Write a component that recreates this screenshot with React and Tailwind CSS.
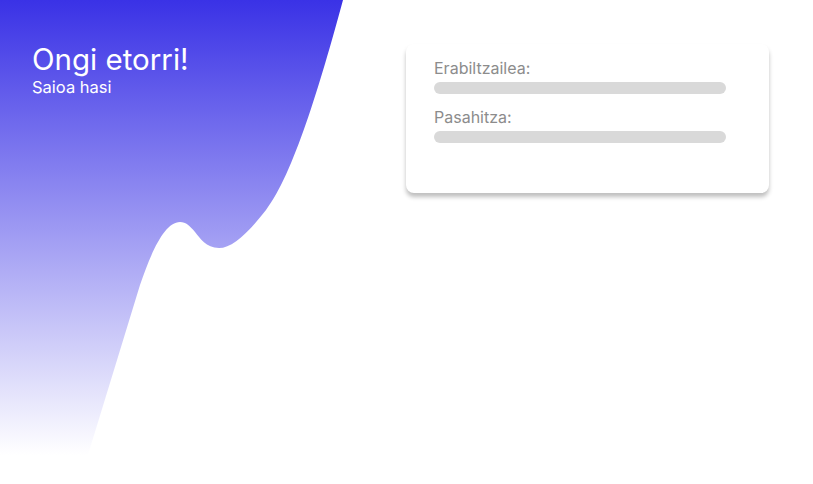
import React from 'react';

function Wave() {
  return (
    <svg
      className="absolute inset-0 pointer-events-none"
      width="813"
      height="484"
      viewBox="0 0 813 484"
    >
      <defs>
        <linearGradient id="bg" x1="0" y1="0" x2="0" y2="484" gradientUnits="userSpaceOnUse">
          <stop offset="0" stopColor="#3a32e6" />
          <stop offset="0.94" stopColor="#ffffff" />
        </linearGradient>
      </defs>
      <path
        d="M0,0 H343 C320,85 293,175 266,210 C248,233 232,248 219,248 C206,248 200,238 195,232 C190,226 186,222 180,222 C165,222 152,250 140,285 L87,458 L87,484 H0 Z"
        fill="url(#bg)"
      />
    </svg>
  );
}

export default function App() {
  return (
    <div
      className="relative w-[813px] h-[484px] overflow-hidden bg-white"
      style={{ fontFamily: 'Inter, "Noto Sans", sans-serif' }}
    >
      <Wave />
      <div className="relative flex">
        {/* welcome text */}
        <div className="w-[406px] pl-8 pt-[42px] text-white">
          <h1 className="text-[29.5px] leading-[35px] font-normal">Ongi etorri!</h1>
          <p className="text-[16.5px] leading-5">Saioa hasi</p>
        </div>

        {/* login card */}
        <div className="mt-[44px] w-[363px] h-[149px] bg-white rounded-lg shadow-[0_4px_4px_rgba(0,0,0,0.25)] px-7 pt-[14px]">
          <label className="block text-[16px] leading-5 text-[#8c8c8c]">Erabiltzailea:</label>
          <div className="mt-[4px] h-3 w-[292px] rounded-full bg-[#d9d9d9]" />
          <label className="block mt-[13px] text-[16px] leading-5 text-[#8c8c8c]">Pasahitza:</label>
          <div className="mt-[4px] h-3 w-[292px] rounded-full bg-[#d9d9d9]" />
        </div>
      </div>
    </div>
  );
}
